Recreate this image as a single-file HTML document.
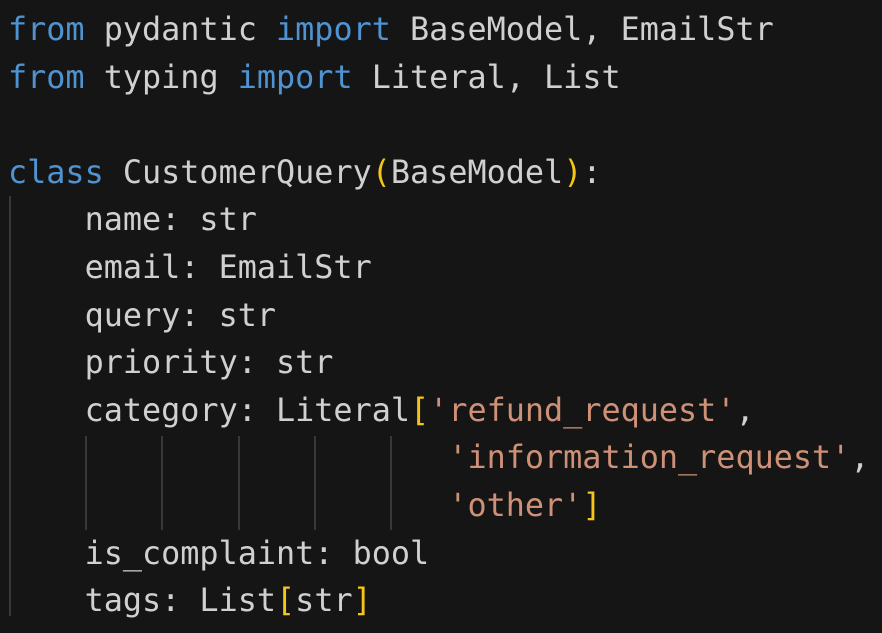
<!DOCTYPE html>
<html><head><meta charset="utf-8"><style>
html,body{margin:0;padding:0;background:#151515;width:882px;height:633px;overflow:hidden}
pre{position:absolute;left:8px;top:6px;margin:0;font-family:"DejaVu Sans Mono","Liberation Mono",monospace;font-size:31.8px;line-height:47.6px;color:#d0d0d0;white-space:pre}
.k{color:#4f93d2}.s{color:#ce9178}.b{color:#f5c518}
.g{position:absolute;width:2px;background:#383838}
</style></head><body>
<div class="g" style="left:9px;top:196px;height:420px"></div>
<div class="g" style="left:85px;top:436px;height:94px"></div>
<div class="g" style="left:161px;top:436px;height:94px"></div>
<div class="g" style="left:238px;top:436px;height:94px"></div>
<div class="g" style="left:314px;top:436px;height:94px"></div>
<div class="g" style="left:390px;top:436px;height:94px"></div>
<pre><span class="k">from</span> pydantic <span class="k">import</span> BaseModel, EmailStr
<span class="k">from</span> typing <span class="k">import</span> Literal, List

<span class="k">class</span> CustomerQuery<span class="b">(</span>BaseModel<span class="b">)</span>:
    name: str
    email: EmailStr
    query: str
    priority: str
    category: Literal<span class="b">[</span><span class="s">'refund_request'</span>,
                       <span class="s">'information_request'</span>,
                       <span class="s">'other'</span><span class="b">]</span>
    is_complaint: bool
    tags: List<span class="b">[</span>str<span class="b">]</span></pre>
</body></html>
